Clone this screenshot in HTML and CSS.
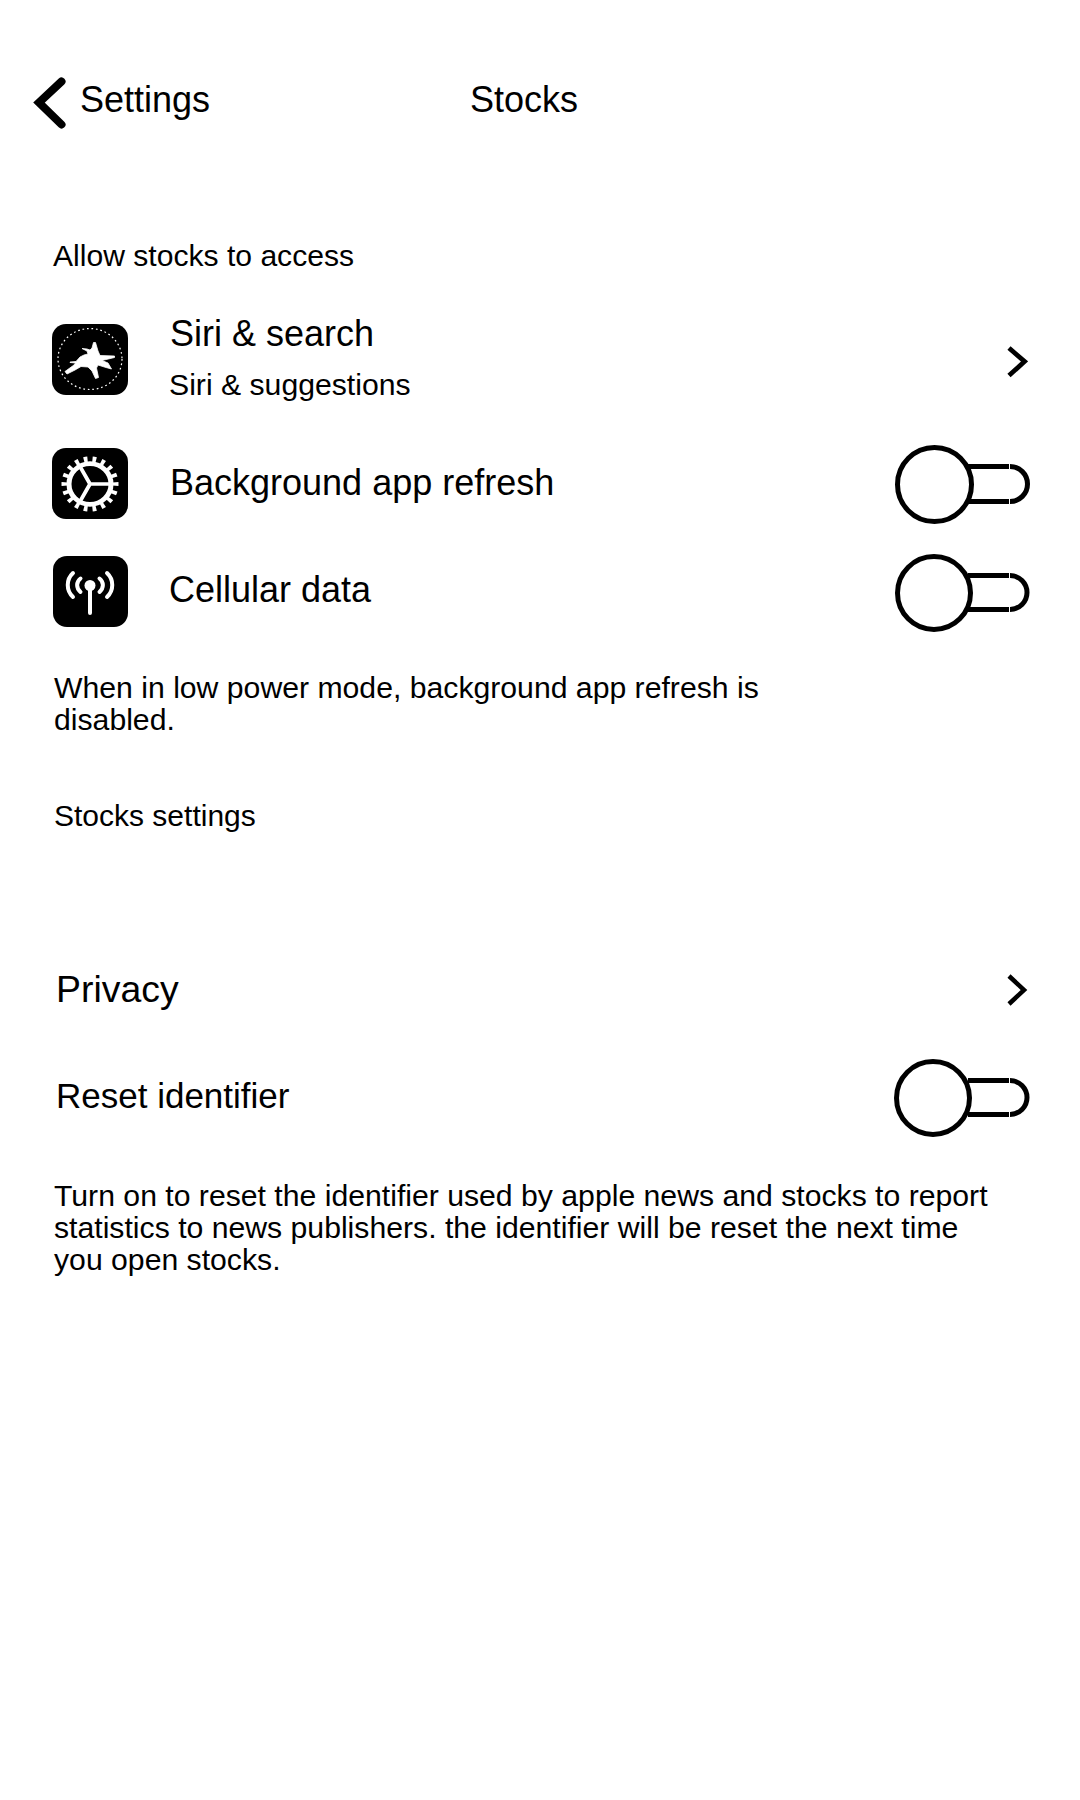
FILE: index.html
```html
<!DOCTYPE html>
<html lang="en">
<head>
<meta charset="utf-8">
<title>Stocks</title>
<link rel="stylesheet" href="styles.css">
</head>
<body>
<main class="screen">
  <header class="topbar">
    <svg class="back" viewBox="0 0 33 52"><path d="M28.500 4.500L6 25.500L28.500 47.500" fill="none" stroke="#000" stroke-width="8" stroke-linecap="round" stroke-linejoin="miter"/></svg>
    <span class="back-label">Settings</span>
    <h1 class="title">Stocks</h1>
  </header>

  <h2 class="section access">Allow stocks to access</h2>

  <div class="row siri">
    <svg class="app-icon" viewBox="0 0 76 71">
      <rect width="76" height="71" rx="14"/>
      <ellipse cx="38" cy="35" rx="32" ry="30.500" fill="none" stroke="#fff" stroke-width="1.200" stroke-dasharray="1.700 2.800"/>
      <path fill="#fff" stroke="#fff" stroke-width=".8" d="M13 47.500L22 41L23.500 39L18 38.500V38L24 37.500L28 33L32 31L36 30L35 27L30 24.500L35 25L38 26L40 24L41.500 18.500L43.500 18.500L46 27L48 31.500L62.500 32V33.500L50 36.500L56 39L59.500 45L54 43.500L46 41L44.500 44L46.500 53.500L43.500 54.500L40 47L36 43L29 42.500L23 46L15 50Z"/>
    </svg>
    <div class="labels">
      <span class="label">Siri &amp; search</span>
      <span class="sub">Siri &amp; suggestions</span>
    </div>
    <svg class="chevron" viewBox="0 0 21 32"><path d="M2 2L17.500 15.500L2 29.500" fill="none" stroke="#000" stroke-width="4.800"/></svg>
  </div>

  <div class="row refresh">
    <svg class="app-icon" viewBox="0 0 76 71">
      <rect width="76" height="71" rx="14"/>
      <g transform="translate(38 36) scale(1 .97)" fill="none" stroke="#fff">
        <circle r="21" stroke-width="5"/>
        <circle r="25.500" stroke-width="6" pathLength="180" stroke-dasharray="4.200 5.800" stroke-dashoffset="2.100"/>
        <path d="M0 0H22M0 0L-10.500 -19M0 0L-10.500 19" stroke-width="3.800"/>
      </g>
    </svg>
    <span class="label">Background app refresh</span>
    <svg class="toggle" viewBox="0 0 137 80">
      <path d="M74 21.500H115M74 56.500H115M116 21.500A17.500 17.500 0 0 1 116 56.500" fill="none" stroke="#000" stroke-width="5"/>
      <circle cx="40.500" cy="39.500" r="37" fill="#fff" stroke="#000" stroke-width="5"/>
    </svg>
  </div>

  <div class="row cellular">
    <svg class="app-icon" viewBox="0 0 76 71">
      <rect x="1" width="75" height="71" rx="14"/>
      <circle cx="38" cy="29.500" r="5.500" fill="#fff"/>
      <path d="M38 30V57M28.500 22.500C24 26 24 32 28.500 36M47.500 22.500C52 26 52 32 47.500 36M21 17C14 23.500 14 34.500 21 41M55 17C62 23.500 62 34.500 55 41" fill="none" stroke="#fff" stroke-width="4" stroke-linecap="round"/>
    </svg>
    <span class="label">Cellular data</span>
    <svg class="toggle" viewBox="0 0 137 80">
      <path d="M74 21.500H115M74 55.500H115M116 21.500A17 17 0 0 1 116 55.500" fill="none" stroke="#000" stroke-width="5"/>
      <circle cx="40" cy="39" r="36.500" fill="#fff" stroke="#000" stroke-width="5"/>
    </svg>
  </div>

  <p class="note power">When in low power mode, background app refresh is<br>disabled.</p>

  <h2 class="section settings">Stocks settings</h2>

  <div class="row privacy">
    <span class="label">Privacy</span>
    <svg class="chevron" viewBox="0 0 21 32"><path d="M2 2L17 16L2 30" fill="none" stroke="#000" stroke-width="4.500"/></svg>
  </div>

  <div class="row reset">
    <span class="label">Reset identifier</span>
    <svg class="toggle" viewBox="0 0 137 80">
      <path d="M74 21.500H115M74 55.500H115M116 21.500A17 17 0 0 1 116 55.500" fill="none" stroke="#000" stroke-width="5"/>
      <circle cx="39" cy="39" r="36.500" fill="#fff" stroke="#000" stroke-width="5"/>
    </svg>
  </div>

  <p class="note report">Turn on to reset the identifier used by apple news and stocks to report<br>statistics to news publishers. the identifier will be reset the next time<br>you open stocks.</p>
</main>
</body>
</html>
```
FILE: styles.css
```css
* { box-sizing: border-box; }
body {
  margin: 0;
  background: #fff;
  color: #000;
  font-family: "Liberation Sans", Arial, sans-serif;
}
h1, h2, p { margin: 0; font-weight: normal; }
svg { display: block; flex: none; }
.screen {
  display: flex;
  flex-direction: column;
  width: 1080px;
  height: 1800px;
  padding-top: 77px;
}
.topbar {
  display: flex;
  height: 52px;
  padding-left: 33px;
  font-size: 36px;
  line-height: 40px;
}
.topbar span, .topbar h1 { margin-top: 3px; }
.back { width: 33px; height: 52px; }
.back-label { width: 389px; padding-left: 14px; }
.title { padding-left: 15px; font-size: 36px; }
.section { padding-left: 54px; font-size: 30px; line-height: 32px; }
.row {
  display: flex;
  align-items: flex-start;
  padding-left: 52px;
}
.label { font-size: 36px; line-height: 40px; white-space: nowrap; }
.app-icon { width: 76px; height: 71px; margin-right: 42px; }
.labels { display: flex; flex-direction: column; }
.sub { margin-top: 15px; font-size: 30.200px; line-height: 32px; margin-left: -1px; }
.chevron { width: 21px; height: 32px; margin-left: auto; margin-right: 52px; }
.toggle { width: 137px; height: 80px; margin-left: auto; margin-right: 49px; }
.note { padding-left: 54px; font-size: 30.200px; line-height: 32px; }

.access { margin-top: 111px; padding-left: 53px; font-size: 30.100px; }
.siri { margin-top: 42px; height: 131px; }
.siri .app-icon { margin-top: 10px; }
.siri .chevron { margin-top: 32px; }
.refresh { height: 109px; }
.refresh .app-icon { margin-top: 3px; }
.refresh .label { margin-top: 18px; }
.cellular { height: 118px; }
.cellular .app-icon { margin-top: 2px; }
.cellular .label { margin-top: 16px; margin-left: -1px; }
.power { height: 128px; }
.settings { height: 174px; }
.privacy, .reset { padding-left: 56px; }
.privacy { height: 85px; }
.privacy .label { margin-top: -5px; font-size: 37.400px; }
.reset { height: 121px; }
.reset .label { font-size: 35px; margin-top: 17px; }
```
